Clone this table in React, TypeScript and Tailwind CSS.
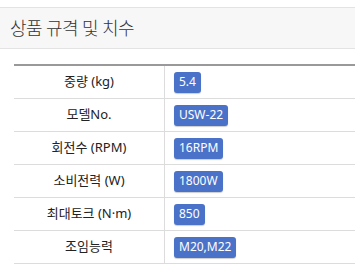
import React from "react";

const specs: { label: string; value: string }[] = [
  { label: "중량 (kg)", value: "5.4" },
  { label: "모델No.", value: "USW-22" },
  { label: "회전수 (RPM)", value: "16RPM" },
  { label: "소비전력 (W)", value: "1800W" },
  { label: "최대토크 (N·m)", value: "850" },
  { label: "조임능력", value: "M20,M22" },
];

export default function App() {
  return (
    <div
      className="w-[355px] h-[266px] overflow-hidden bg-white"
      style={{ fontFamily: '"Noto Sans", "Noto Sans CJK KR", sans-serif' }}
    >
      <div className="h-[7px]" />
      <div className="h-[42px] border-y border-[#e3e3e3] bg-[#f7f7f7] flex items-center pl-[10px]">
        <h2 className="text-[18px] leading-none text-[#333] tracking-[-0.6px] font-light">
          상품 규격 및 치수
        </h2>
      </div>
      <div className="pl-[14px] pt-[15px]">
        <div className="w-[360px] border-t-2 border-[#999]">
          {specs.map((s) => (
            <div key={s.label} className="flex h-[33px] border-b border-[#dcdcdc]">
              <div className="w-[151px] shrink-0 border-r border-[#dcdcdc] flex items-center justify-center text-[13px] text-[#222]">
                {s.label}
              </div>
              <div className="flex items-center pl-[9px]">
                <span className="inline-flex items-center h-[21px] px-[5px] rounded-[3px] bg-[#4a72c9] text-white text-[12px] shadow-[0_1px_1px_rgba(0,0,0,0.2)]">
                  {s.value}
                </span>
              </div>
            </div>
          ))}
        </div>
      </div>
    </div>
  );
}
